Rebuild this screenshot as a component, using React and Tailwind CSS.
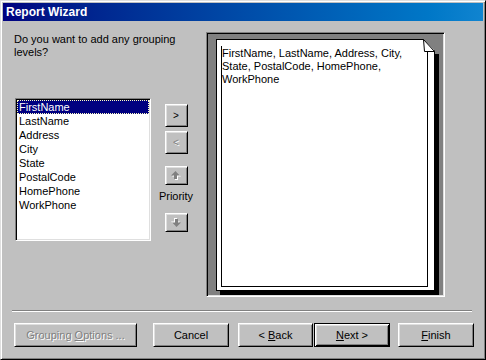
import React from "react";

const raised =
  "bg-[#c0c0c0] border border-t-white border-l-white border-r-black border-b-black shadow-[inset_1px_1px_0_#dfdfdf,inset_-1px_-1px_0_#808080]";
const sunken =
  "border border-t-[#808080] border-l-[#808080] border-r-white border-b-white shadow-[inset_1px_1px_0_#000,inset_-1px_-1px_0_#dfdfdf]";
const disabledText = "text-[#808080] [text-shadow:1px_1px_0_#fff]";

const fields = [
  "FirstName",
  "LastName",
  "Address",
  "City",
  "State",
  "PostalCode",
  "HomePhone",
  "WorkPhone",
];

function BlockArrow({ down }) {
  const pts = "4.5,0 9,4.5 6,4.5 6,8 3,8 3,4.5 0,4.5";
  return (
    <svg width="10" height="9" viewBox="0 0 10 9" className={down ? "rotate-180" : ""}>
      <polygon points={pts} fill="#fff" transform="translate(1 1)" />
      <polygon points={pts} fill="#808080" />
    </svg>
  );
}

export default function App() {
  return (
    <div className="w-[486px] h-[360px] flex flex-col p-[2px] bg-[#c0c0c0] border border-t-[#dfdfdf] border-l-[#dfdfdf] border-r-black border-b-black shadow-[inset_1px_1px_0_#fff,inset_-1px_-1px_0_#808080] text-[11px] text-black font-['Liberation_Sans',Arial,sans-serif] select-none">
      {/* Title bar */}
      <div className="h-[18px] flex items-center pl-[3px] bg-linear-to-r from-[#000080] to-[#1084d0] text-white font-bold text-[12px]">
        Report Wizard
      </div>

      {/* Main area */}
      <div className="flex px-[11px] pt-[11px]">
        {/* Left column */}
        <div className="w-[192px] flex flex-col">
          <p className="leading-[13px] pt-[1px]">
            Do you want to add any grouping
            <br />
            levels?
          </p>
          <div className="flex mt-[39px]">
            <div className={`w-[136px] h-[143px] ml-[1px] bg-white p-[1px] ${sunken}`}>
              {fields.map((f, i) =>
                i === 0 ? (
                  <div
                    key={f}
                    className="h-[14px] leading-[12px] pl-[1px] bg-[#000080] text-white border border-dotted border-[#ffffc0]"
                  >
                    {f}
                  </div>
                ) : (
                  <div key={f} className="h-[14px] leading-[14px] pl-[2px]">
                    {f}
                  </div>
                )
              )}
            </div>
            <div className="w-[30px] ml-[10px] flex flex-col items-center pt-[6px]">
              <button className={`w-[23px] h-[23px] flex items-center justify-center text-[10px] ${raised}`}>
                &gt;
              </button>
              <button
                className={`w-[23px] h-[23px] mt-[4px] flex items-center justify-center text-[10px] ${raised} ${disabledText}`}
              >
                &lt;
              </button>
              <button className={`w-[23px] h-[19px] mt-[12px] flex items-center justify-center ${raised}`}>
                <BlockArrow />
              </button>
              <span className="mt-[5px] leading-[13px]">Priority</span>
              <button className={`w-[23px] h-[19px] mt-[10px] flex items-center justify-center ${raised}`}>
                <BlockArrow down />
              </button>
            </div>
          </div>
        </div>

        {/* Preview panel */}
        <div className={`w-[239px] h-[265px] bg-[#808080] pl-[9px] pt-[6px] ${sunken}`}>
          <div className="relative w-[219px] h-[252px] bg-white border border-black shadow-[4px_4px_0_#000] flex flex-col">
            <div className="flex-1 ml-[4px] mr-[6px] mt-[6px] mb-[3px] border-l border-r border-b border-black leading-[13px] pt-[1px]">
              FirstName, LastName, Address, City,
              <br />
              State, PostalCode, HomePhone,
              <br />
              WorkPhone
            </div>
            <svg
              width="17"
              height="17"
              viewBox="0 0 17 17"
              className="absolute top-[-1px] right-[-5px]"
            >
              <polygon points="1,0 17,0 17,15 13,15 13,12" fill="#808080" />
              <polygon points="1.5,0.5 2.5,12.5 12.5,12.5" fill="#fff" stroke="#000" strokeWidth="1" />
            </svg>
          </div>
        </div>
      </div>

      {/* Separator */}
      <div className="mt-[13px] ml-[9px] mr-[11px] h-0 border-t border-t-[#808080] border-b border-b-white" />

      {/* Buttons */}
      <div className="flex mt-[11px]">
        <button className={`ml-[11px] w-[123px] h-[24px] flex items-center justify-center ${raised} ${disabledText}`}>
          <span>
            Grouping <span className="underline">O</span>ptions ...
          </span>
        </button>
        <button className={`ml-[16px] w-[76px] h-[24px] flex items-center justify-center ${raised}`}>
          Cancel
        </button>
        <button className={`ml-[9px] w-[75px] h-[24px] flex items-center justify-center ${raised}`}>
          <span>
            &lt; <span className="underline">B</span>ack
          </span>
        </button>
        <button className="ml-[1px] w-[76px] h-[24px] flex items-center justify-center bg-[#c0c0c0] border border-black shadow-[inset_1px_1px_0_#fff,inset_-1px_-1px_0_#000,inset_2px_2px_0_#dfdfdf,inset_-2px_-2px_0_#808080]">
          <span>
            <span className="underline">N</span>ext &gt;
          </span>
        </button>
        <button className={`ml-[8px] w-[76px] h-[24px] flex items-center justify-center ${raised}`}>
          <span>
            <span className="underline">F</span>inish
          </span>
        </button>
      </div>
    </div>
  );
}
